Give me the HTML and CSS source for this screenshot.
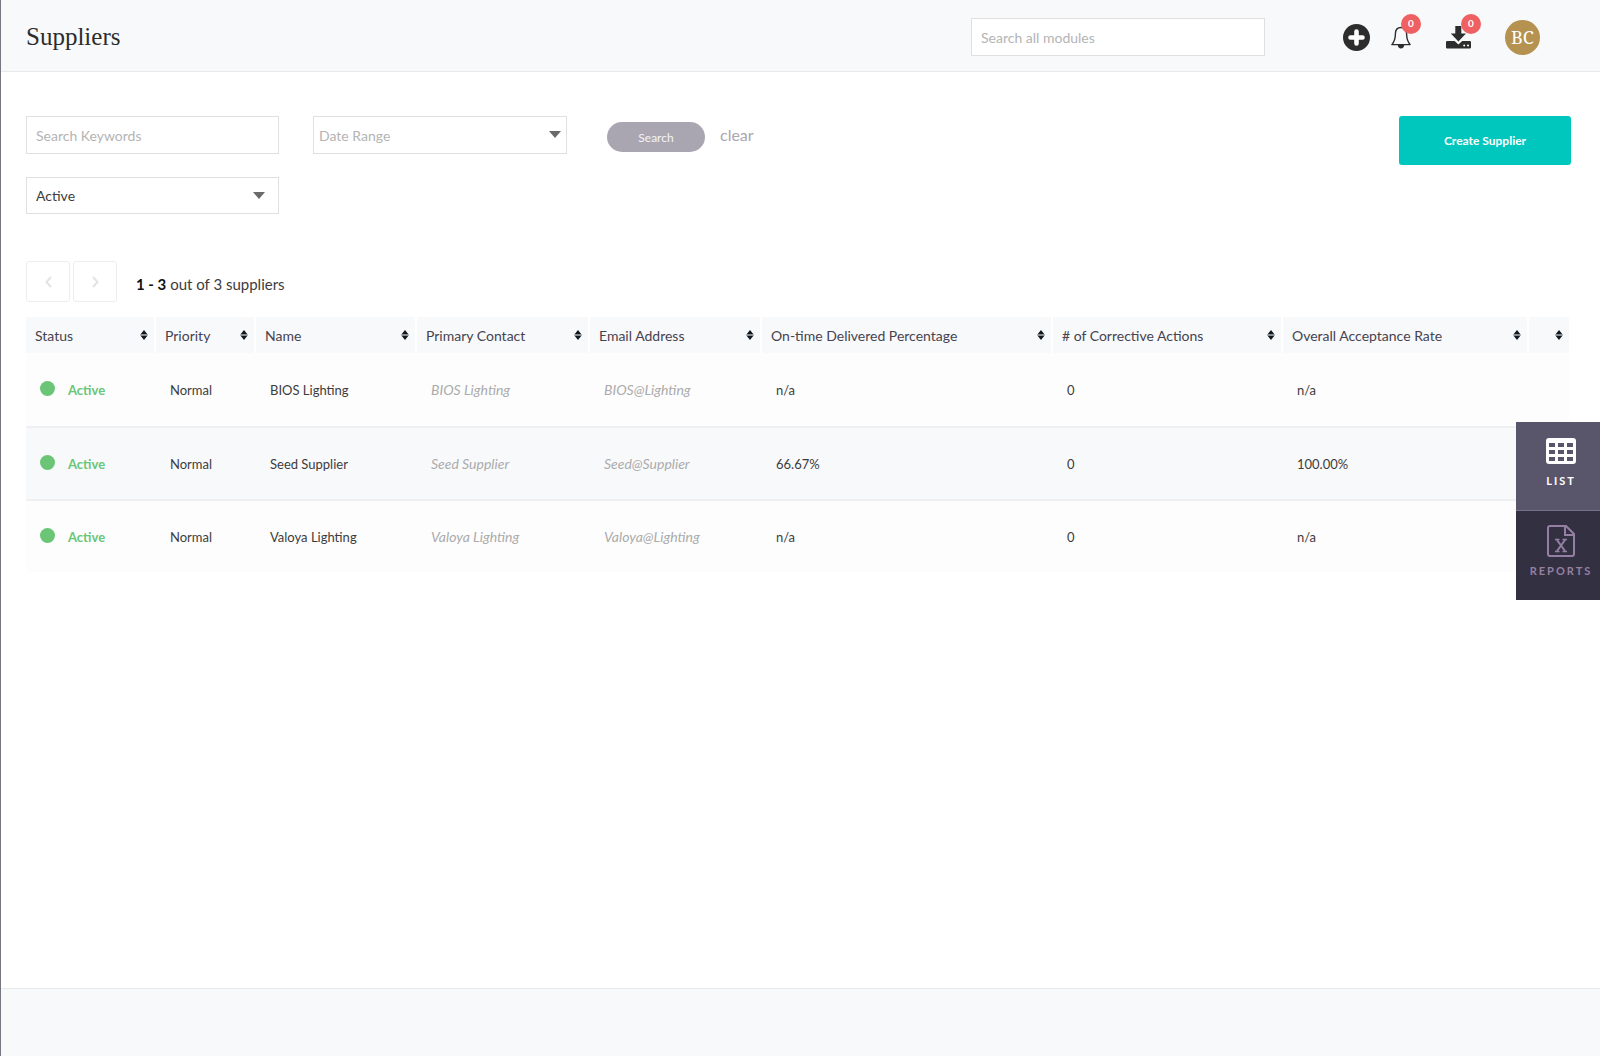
FILE: index.html
```html
<!DOCTYPE html>
<html lang="en">
<head>
  <meta charset="UTF-8" />
  <title>Suppliers</title>
  <meta name="viewport" content="width=device-width, initial-scale=1.0" />
  <link rel="stylesheet" href="styles.css">
</head>
<body>
  <svg class="sprite" aria-hidden="true">
    <symbol id="sort" viewBox="0 0 8 10">
      <path d="M4 0 L7.6 4.4 H.4 Z M4 10 L7.6 5.6 H.4 Z" fill="#10181f" />
      <path d="M.4 4.4 H7.6 V5.6 H.4 Z" fill="#8b9095" />
    </symbol>
  </svg>

  <header class="topbar">
    <h1>Suppliers</h1>
    <input class="field module-search" type="search" placeholder="Search all modules" aria-label="Search all modules">
    <div class="actions">
      <button class="icon-btn add" aria-label="Add">
        <svg width="27" height="27" viewBox="0 0 27 27">
          <circle cx="13.5" cy="13.5" r="13.5" fill="#2d2d2d" />
          <path d="M13.5 7.5 V19.5 M7.5 13.5 H19.5" stroke="#fff" stroke-width="4.6" stroke-linecap="round" />
        </svg>
      </button>
      <button class="icon-btn bell" aria-label="Notifications">
        <svg width="20" height="23" viewBox="0 0 20 23">
          <path d="M10 1.5 C6 1.5 4.4 4.6 4.4 8 C4.4 13.5 3 16 .9 18.6 H19.1 C17 16 15.6 13.5 15.6 8 C15.6 4.6 14 1.5 10 1.5 Z" fill="none" stroke="#2d2d2d" stroke-width="1.4" stroke-linejoin="round" />
          <path d="M6.8 19 H13.2 C13.2 21.2 11.8 22.5 10 22.5 C8.2 22.5 6.8 21.2 6.8 19 Z" fill="#2d2d2d" />
        </svg>
        <span class="badge">0</span>
      </button>
      <button class="icon-btn download" aria-label="Downloads">
        <svg width="25" height="23" viewBox="0 0 25 23">
          <path d="M9.3 0 H15.3 V7.4 H20 L12.4 15.4 L4.8 7.4 H9.3 Z" fill="#2d2d2d" />
          <path d="M1.3 15 H8.6 L12.4 18.4 L16.2 15 H23.7 Q25 15 25 16.3 V21.2 Q25 22.5 23.7 22.5 H1.3 Q0 22.5 0 21.2 V16.3 Q0 15 1.3 15 Z" fill="#2d2d2d" />
          <circle cx="18.2" cy="19.6" r="1" fill="#fff" />
          <circle cx="22" cy="19.6" r="1" fill="#fff" />
        </svg>
        <span class="badge">0</span>
      </button>
      <button class="avatar">BC</button>
    </div>
  </header>

  <main>
    <form class="filters">
      <div class="filter-grid">
        <input class="field" type="text" placeholder="Search Keywords" aria-label="Search Keywords">
        <div class="select date">
          <select class="field" aria-label="Date Range"><option>Date Range</option></select>
        </div>
        <div class="select status-filter">
          <select class="field" aria-label="Status"><option>Active</option><option>Inactive</option></select>
        </div>
      </div>
      <button class="search-btn" type="button">Search</button>
      <a class="clear" href="#">clear</a>
      <button class="create-btn" type="button">Create Supplier</button>
    </form>

    <div class="pager">
      <button class="page-btn" aria-label="Previous page">
        <svg width="7" height="12" viewBox="0 0 7 12"><path d="M6 1 L1.5 6 L6 11" fill="none" stroke="#e3e3e5" stroke-width="2" /></svg>
      </button>
      <button class="page-btn" aria-label="Next page">
        <svg width="7" height="12" viewBox="0 0 7 12"><path d="M1 1 L5.5 6 L1 11" fill="none" stroke="#e3e3e5" stroke-width="2" /></svg>
      </button>
      <p><strong>1 - 3</strong> out of 3 suppliers</p>
    </div>

    <table class="suppliers">
      <colgroup>
        <col class="c-status"><col class="c-priority"><col class="c-name"><col class="c-contact"><col class="c-email">
        <col class="c-delivered"><col class="c-actions"><col class="c-rate"><col class="c-more">
      </colgroup>
      <thead>
        <tr>
          <th><button>Status<svg><use href="#sort" /></svg></button></th>
          <th><button>Priority<svg><use href="#sort" /></svg></button></th>
          <th><button>Name<svg><use href="#sort" /></svg></button></th>
          <th><button>Primary Contact<svg><use href="#sort" /></svg></button></th>
          <th><button>Email Address<svg><use href="#sort" /></svg></button></th>
          <th><button>On-time Delivered Percentage<svg><use href="#sort" /></svg></button></th>
          <th><button># of Corrective Actions<svg><use href="#sort" /></svg></button></th>
          <th><button>Overall Acceptance Rate<svg><use href="#sort" /></svg></button></th>
          <th><button aria-label="Sort"><svg><use href="#sort" /></svg></button></th>
        </tr>
      </thead>
      <tbody>
        <tr>
          <td><span class="status">Active</span></td>
          <td>Normal</td>
          <td>BIOS Lighting</td>
          <td class="muted">BIOS Lighting</td>
          <td class="muted">BIOS@Lighting</td>
          <td>n/a</td>
          <td>0</td>
          <td>n/a</td>
          <td></td>
        </tr>
        <tr>
          <td><span class="status">Active</span></td>
          <td>Normal</td>
          <td>Seed Supplier</td>
          <td class="muted">Seed Supplier</td>
          <td class="muted">Seed@Supplier</td>
          <td>66.67%</td>
          <td>0</td>
          <td>100.00%</td>
          <td></td>
        </tr>
        <tr>
          <td><span class="status">Active</span></td>
          <td>Normal</td>
          <td>Valoya Lighting</td>
          <td class="muted">Valoya Lighting</td>
          <td class="muted">Valoya@Lighting</td>
          <td>n/a</td>
          <td>0</td>
          <td>n/a</td>
          <td></td>
        </tr>
      </tbody>
    </table>
  </main>

  <nav class="side-tabs">
    <a class="tab active" href="#">
      <svg width="30" height="26" viewBox="0 0 30 26">
        <rect width="30" height="26" rx="3" fill="#fff" />
        <path d="M3 5h6v4H3z M12 5h6v4h-6z M21 5h6v4h-6z M3 12h6v4H3z M12 12h6v4h-6z M21 12h6v4h-6z M3 19h6v4H3z M12 19h6v4h-6z M21 19h6v4h-6z" fill="#59566b" />
      </svg>
      LIST
    </a>
    <a class="tab" href="#">
      <svg width="28" height="32" viewBox="0 0 28 32" fill="none" stroke="#9580a3" stroke-width="2">
        <path d="M3 1 H19 L27 9 V29 Q27 31 25 31 H3 Q1 31 1 29 V3 Q1 1 3 1 Z M18 1 V10 H27" />
        <path d="M10 15 L18 26 M18 15 L10 26" />
        <path d="M8 14.5 H12.5 M15.5 14.5 H20 M8 26.5 H12.5 M15.5 26.5 H20" stroke-width="1.6" />
      </svg>
      REPORTS
    </a>
  </nav>

  <footer></footer>
</body>
</html>
```
FILE: styles.css
```css
* {
  box-sizing: border-box;
}

body {
  display: flex;
  flex-direction: column;
  min-height: 100vh;
  margin: 0;
  border-left: 1px solid #77757f;
  background-color: #fff;
  color: #3c3c3c;
  font-family: Lato, "Liberation Sans", sans-serif;
  font-size: 14px;
}

button {
  padding: 0;
  border: none;
  background: none;
  color: inherit;
  font: inherit;
  cursor: pointer;
}

a {
  text-decoration: none;
}

svg {
  display: block;
}

.sprite {
  position: absolute;
  width: 0;
  height: 0;
}

/* top bar */
.topbar {
  display: flex;
  align-items: center;
  height: 72px;
  padding: 3px 60px 0 25px;
  border-bottom: 1px solid #e8e9eb;
  background-color: #f8f9fb;
}

h1 {
  margin: 0 auto 0 0;
  color: #2d2d2d;
  font-family: "Liberation Serif", serif;
  font-size: 25px;
  font-weight: normal;
}

.field {
  width: 100%;
  height: 38px;
  padding: 0 9px;
  border: 1px solid #e0e0e0;
  border-radius: 0;
  outline: none;
  appearance: none;
  background-color: #fff;
  color: #3c3c3c;
  font: inherit;
}

.field::placeholder {
  color: #b4b4b4;
  opacity: 1;
}

.module-search {
  width: 294px;
}

.actions {
  display: flex;
  align-items: center;
  margin-left: 78px;
}

.icon-btn {
  position: relative;
}

.bell {
  margin-left: 21px;
}

.download {
  margin: 0 34px 0 35px;
}

.badge {
  position: absolute;
  top: -12px;
  right: -10px;
  width: 20px;
  height: 20px;
  border-radius: 50%;
  background-color: #ee6062;
  color: #fff;
  font-size: 10px;
  font-weight: bold;
  line-height: 18px;
}

.avatar {
  width: 35px;
  height: 35px;
  border-radius: 50%;
  background-color: #b59250;
  color: #fff;
  font-family: "Noto Serif", "Liberation Serif", serif;
  font-size: 18px;
}

/* filters */
main {
  flex: 1;
  padding: 44px 29px 40px 25px;
}

.filters {
  display: flex;
  align-items: flex-start;
}

.filter-grid {
  display: grid;
  grid-template-columns: 253px 254px;
  gap: 23px 34px;
}

.select {
  position: relative;
}

.select::after {
  content: "";
  position: absolute;
  top: 15px;
  right: 14px;
  border: 6px solid transparent;
  border-top: 7px solid #6a6a6a;
  border-bottom: none;
  pointer-events: none;
}

.date::after {
  right: 6px;
}

.date .field {
  padding: 0 5px;
  color: #b4b4b4;
}

.status-filter .field {
  height: 37px;
}

.search-btn {
  width: 98px;
  height: 30px;
  margin: 6px 15px 0 40px;
  border-radius: 15px;
  background-color: #a9a6b2;
  color: #f4f4f6;
  font-size: 12px;
}

.clear {
  margin-top: 9px;
  color: #a9a6b2;
  font-size: 16px;
  line-height: 20px;
}

.create-btn {
  width: 172px;
  height: 49px;
  margin-left: auto;
  border-radius: 3px;
  background-color: #00c7bd;
  color: #fff;
  font-size: 12px;
  font-weight: bold;
}

/* pager */
.pager {
  display: flex;
  align-items: center;
  gap: 3px;
  margin: 47px 0 15px;
}

.page-btn {
  display: flex;
  align-items: center;
  justify-content: center;
  width: 44px;
  height: 41px;
  border: 1px solid #ededee;
  border-radius: 3px;
}

.pager p {
  margin: 4px 0 0 16px;
  font-size: 15px;
}

.pager strong {
  color: #111;
}

/* table */
.suppliers {
  width: calc(100% - 2px);
  border-collapse: separate;
  border-spacing: 0;
  table-layout: fixed;
}

.c-status { width: 130px; }
.c-priority { width: 100px; }
.c-name { width: 161px; }
.c-contact { width: 173px; }
.c-email { width: 172px; }
.c-delivered { width: 291px; }
.c-actions { width: 230px; }
.c-rate { width: 246px; }
.c-more { width: 40px; }

th {
  height: 36px;
  padding: 0 6px 0 9px;
  border-right: 2px solid #fff;
  background-color: #f8f9fb;
  color: #46434f;
  font-weight: normal;
}

th:last-child {
  border-right: none;
}

th button {
  display: flex;
  align-items: center;
  width: 100%;
  white-space: nowrap;
}

th svg {
  width: 8px;
  height: 10px;
  margin-left: auto;
}

td {
  height: 73px;
  padding: 0 0 0 14px;
  background-color: #fdfdfd;
  font-size: 13px;
}

tr + tr td {
  border-top: 2px solid #eef0f3;
}

tbody tr:nth-child(even) td {
  background-color: #f8f9fb;
}

td.muted {
  color: #ababab;
  font-size: 14px;
  font-style: italic;
}

.status {
  display: flex;
  align-items: center;
  gap: 13px;
  color: #68c676;
  font-weight: bold;
}

.status::before {
  content: "";
  width: 15px;
  height: 15px;
  margin-bottom: 3px;
  border-radius: 50%;
  background-color: #6ac576;
}

/* tabs pinned to the right edge */
.side-tabs {
  position: fixed;
  top: 422px;
  right: 0;
  width: 84px;
}

.tab {
  display: flex;
  flex-direction: column;
  align-items: center;
  gap: 7px;
  height: 89px;
  padding: 14px 0 0 6px;
  background-color: #333042;
  color: #9580a3;
  font-size: 11px;
  font-weight: bold;
  line-height: 14px;
  letter-spacing: 2px;
}

.tab.active {
  gap: 10px;
  padding-top: 16px;
  border-bottom: 1px solid #77718a;
  background-color: #59566b;
  color: #fff;
}

footer {
  height: 68px;
  border-top: 1px solid #e8e9eb;
  background-color: #f8f9fb;
}
```
